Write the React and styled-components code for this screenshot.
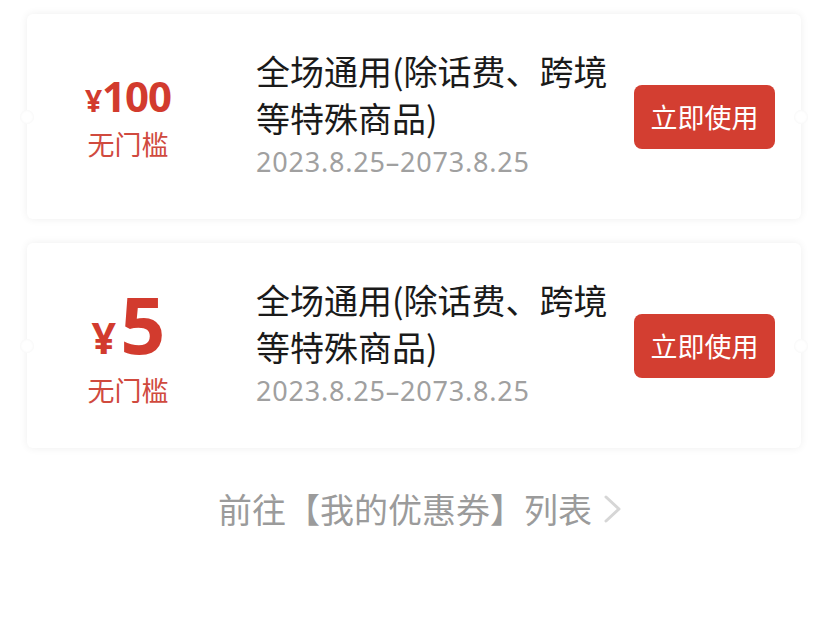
import React from "react";
import styled, { createGlobalStyle } from "styled-components";

const Global = createGlobalStyle`
  html, body { margin: 0; padding: 0; background: #ffffff; }
  body { font-family: "Noto Sans", "Noto Sans CJK SC", sans-serif; }
  * { box-sizing: border-box; }
`;

const Page = styled.div`
  width: 828px;
  height: 639px;
  padding: 14px 27px 0 27px;
  display: flex;
  flex-direction: column;
  gap: 24px;
  background: #fff;
`;

const Card = styled.div`
  position: relative;
  height: 205px;
  background: #fff;
  border-radius: 6px;
  box-shadow: 0 0 8px rgba(0, 0, 0, 0.07);
  display: flex;
  align-items: center;
  padding-right: 26px;
`;

const Notch = styled.span`
  position: absolute;
  top: 50%;
  ${(p) => (p.side === "left" ? "left: -7px;" : "right: -7px;")}
  width: 14px;
  height: 14px;
  margin-top: -7px;
  border-radius: 50%;
  background: #fff;
  box-shadow: inset 0 0 3px rgba(0, 0, 0, 0.06);
`;

const Amount = styled.div`
  width: 202px;
  flex: none;
  display: flex;
  flex-direction: column;
  align-items: center;
  color: #d23b2e;
  margin-top: ${(p) => (p.big ? "7px" : "0")};
`;

const Price = styled.div`
  display: flex;
  align-items: baseline;
  font-family: "Noto Sans", "Noto Sans CJK SC", sans-serif;
  line-height: ${(p) => (p.big ? "68px" : "50px")};
`;

const Yen = styled.span`
  font-size: ${(p) => (p.big ? "43px" : "30px")};
  font-weight: 700;
  margin-right: ${(p) => (p.big ? "4px" : "0")};
`;

const Num = styled.span`
  font-size: ${(p) => (p.big ? "79px" : "42px")};
  font-weight: 700;
  letter-spacing: -1px;
`;

const Threshold = styled.div`
  font-family: "Noto Sans CJK SC", sans-serif;
  font-size: 27px;
  line-height: 36px;
  color: #d04a3e;
`;

const Info = styled.div`
  flex: 1;
  margin-left: 27px;
  display: flex;
  flex-direction: column;
  margin-top: -4px;
`;

const Title = styled.div`
  font-family: "Noto Sans CJK SC", sans-serif;
  font-size: 34px;
  line-height: 47px;
  color: #1a1a1a;
  width: 366px;
`;

const DateText = styled.div`
  font-family: "Noto Sans", "Noto Sans CJK SC", sans-serif;
  font-size: 27px;
  letter-spacing: 0.8px;
  line-height: 42px;
  color: #a0a0a0;
`;

const UseButton = styled.button`
  flex: none;
  width: 141px;
  height: 64px;
  border: none;
  border-radius: 8px;
  background: #d33e31;
  color: #fff;
  font-family: "Noto Sans CJK SC", sans-serif;
  font-size: 27px;
  padding: 0;
  display: flex;
  align-items: center;
  justify-content: center;
`;

const Footer = styled.div`
  margin-top: 12px;
  display: flex;
  align-items: center;
  justify-content: center;
  gap: 11px;
  font-family: "Noto Sans CJK SC", sans-serif;
  font-size: 34px;
  line-height: 50px;
  color: #9b9b9b;
  padding-left: 12px;
`;

const Chevron = () => (
  <svg width="19" height="28" viewBox="0 0 19 28" fill="none">
    <path d="M3 2 L16 14 L3 26" stroke="#d6d6d6" strokeWidth="3" strokeLinecap="round" strokeLinejoin="round" />
  </svg>
);

const coupons = [
  { value: "100", big: false },
  { value: "5", big: true },
];

export default function App() {
  return (
    <>
      <Global />
      <Page>
        {coupons.map((c) => (
          <Card key={c.value}>
            <Notch side="left" />
            <Notch side="right" />
            <Amount big={c.big}>
              <Price big={c.big}>
                <Yen big={c.big}>¥</Yen>
                <Num big={c.big}>{c.value}</Num>
              </Price>
              <Threshold>无门槛</Threshold>
            </Amount>
            <Info>
              <Title>全场通用(除话费、跨境等特殊商品)</Title>
              <DateText>2023.8.25–2073.8.25</DateText>
            </Info>
            <UseButton>立即使用</UseButton>
          </Card>
        ))}
        <Footer>
          <span>前往【我的优惠券】列表</span>
          <Chevron />
        </Footer>
      </Page>
    </>
  );
}
